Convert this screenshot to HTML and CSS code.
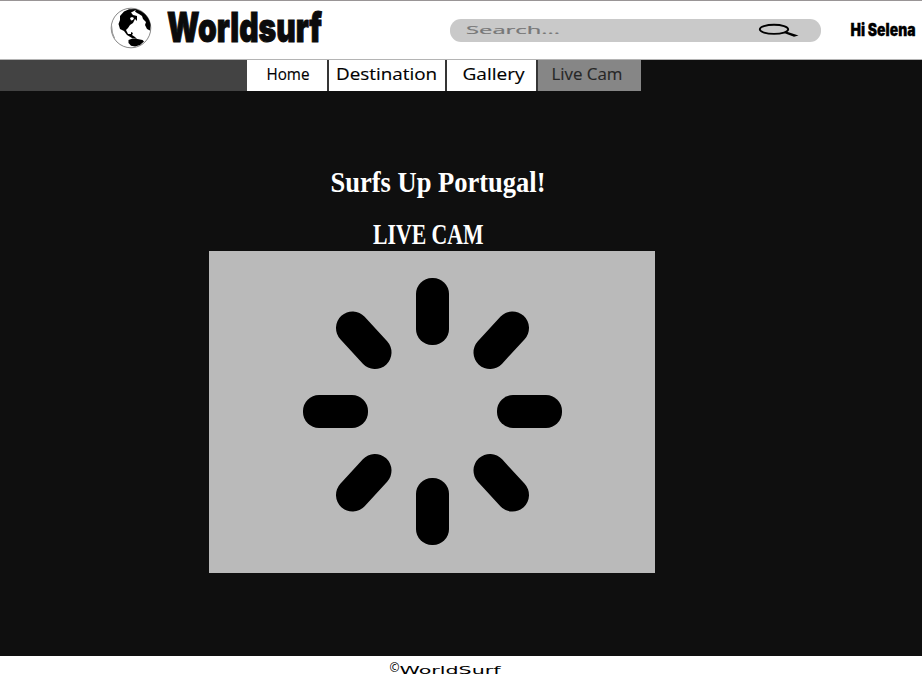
FILE: index.html
```html
<!DOCTYPE html>
<html lang="en">
<head>
<meta charset="utf-8">
<title>Worldsurf</title>
<link rel="stylesheet" href="styles.css">
</head>
<body>
<header class="header">
  <svg class="globe" viewBox="0 0 42 42" aria-hidden="true">
    <circle cx="21" cy="21" r="19.800" fill="#fff" stroke="#555" stroke-width=".7"/>
    <path d="M10 9L14 4.500L19 2.200L27 2L24 4L21 5.500L23 8L27 9L27 14L25 12L23 16L20 18L18 21L16 23L18 27L21 27L21 25L23 26L22 28L25 30L27 32L22 31L17 28L14 24L10 22L8.500 17L10 13Z"/>
    <path d="M26 2.200C34 4 40 11 40.500 18L40 23.500L37 22L35 18L36 15L33 12L32 9L29 7L27 6L25 4.500Z"/>
    <path d="M18.500 33L22.500 31.500L27.500 32L32.500 33L34 34.500L30 38L25 39.500L21 38.800L18.500 36Z"/>
    <path d="M20 11l2-1 2 1-1 2-2 .5z" fill="#fff"/>
    <path d="M1.500 18l1 8 2 5" fill="none" stroke="#999"/>
  </svg>
  <svg class="brand" viewBox="0 0 170 58"><text x="1" y="41" textLength="155" lengthAdjust="spacingAndGlyphs">Worldsurf</text></svg>
  <div class="search">
    <svg class="placeholder" viewBox="0 0 100 22"><text x="0" y="15" textLength="94" lengthAdjust="spacingAndGlyphs">Search...</text></svg>
    <svg class="lens" viewBox="0 0 42 16" aria-hidden="true"><ellipse cx="16" cy="6.300" rx="14.200" ry="4.600"/><path d="M25.500 9.500l3.500-.8 11.500 3.800-4.500 1.200-10-3.700z"/></svg>
  </div>
  <svg class="greeting" viewBox="0 0 72 36"><text x="0.500" y="24" textLength="65" lengthAdjust="spacingAndGlyphs">Hi Selena</text></svg>
</header>
<nav class="nav">
  <div class="rail"></div>
  <a class="tab home"><svg viewBox="0 0 80 31"><text x="19.500" y="20" textLength="43" lengthAdjust="spacingAndGlyphs">Home</text></svg></a>
  <a class="tab destination"><svg viewBox="0 0 116 31"><text x="7" y="20" textLength="101" lengthAdjust="spacingAndGlyphs">Destination</text></svg></a>
  <a class="tab gallery"><svg viewBox="0 0 89 31"><text x="15.500" y="20" textLength="62" lengthAdjust="spacingAndGlyphs">Gallery</text></svg></a>
  <a class="tab live"><svg viewBox="0 0 103 31"><text x="13.500" y="20" textLength="71" lengthAdjust="spacingAndGlyphs">Live Cam</text></svg></a>
</nav>
<main class="main">
  <svg class="title" viewBox="0 0 446 40"><text x="121.500" y="31" textLength="215" lengthAdjust="spacingAndGlyphs">Surfs Up Portugal!</text></svg>
  <svg class="subtitle" viewBox="0 0 446 50"><text x="164" y="43" textLength="110.500" lengthAdjust="spacingAndGlyphs">LIVE CAM</text></svg>
  <section class="video">
    <svg class="spinner" viewBox="0 0 260 268" aria-label="Loading">
      <rect x="114" y="0" width="33" height="67" rx="16"/>
      <rect x="114" y="200" width="33" height="67" rx="16"/>
      <rect x="1" y="117" width="65" height="33" rx="16"/>
      <rect x="195" y="117" width="65" height="33" rx="16"/>
      <path d="M50.500 50L73 74.500M210.500 50L188 74.500M50.500 217L73 192.500M210.500 217L188 192.500"/>
    </svg>
  </section>
</main>
<footer class="footer">
  <svg viewBox="0 0 120 20"><text class="mark" x="0.500" y="16" textLength="10" lengthAdjust="spacingAndGlyphs">©</text><text class="name" x="10.500" y="18" textLength="101" lengthAdjust="spacingAndGlyphs">WorldSurf</text></svg>
</footer>
</body>
</html>
```

FILE: styles.css
```css
* { box-sizing: border-box; }
body {
  margin: 0;
  height: 676px;
  overflow: hidden;
  display: flex;
  flex-direction: column;
  background: #0f0f0f;
  font-family: "Open Sans", sans-serif;
}
svg { display: block; flex: none; overflow: visible; }
.header {
  height: 60px;
  display: flex;
  align-items: flex-start;
  padding-left: 110px;
  background: #fff;
  border-top: 1px solid #999596;
  border-bottom: 1px solid #b4b4b4;
}
.globe { width: 42px; height: 42px; margin-top: 6px; }
.brand { width: 170px; height: 58px; margin-left: 14px; }
.brand text {
  font: 900 41px Inter, sans-serif;
  fill: #0b0b0b;
  stroke: #0b0b0b;
  stroke-width: 1px;
}
.search {
  width: 371px;
  height: 23px;
  margin: 18px 0 0 114px;
  padding: 0 21px 0 16px;
  display: flex;
  justify-content: space-between;
  border-radius: 11px;
  background: #c9c9c9;
}
.placeholder { width: 100px; height: 22px; }
.placeholder text { font-size: 11.5px; fill: #777; stroke: #777; stroke-width: .2px; }
.lens { width: 42px; height: 16px; margin-top: 4px; }
.lens ellipse { fill: none; stroke: #000; stroke-width: 1.9px; }
.greeting { width: 72px; height: 36px; margin: 11px 0 0 29px; }
.greeting text { font: 900 17px Inter, sans-serif; fill: #000; stroke: #000; stroke-width: .3px; }
.nav { height: 31px; display: flex; }
.rail { width: 247px; background: #434343; }
.tab { background: #fff; border-right: 2px solid #353535; }
.tab svg { width: 100%; height: 31px; }
.tab text { font-size: 16px; fill: #000; stroke: #000; stroke-width: .15px; }
.home { width: 82px; }
.destination { width: 118px; }
.gallery { width: 91px; }
.live { width: 103px; background: #868686; border: 0; }
.tab.live text { fill: #262626; stroke: #262626; }
.main {
  width: 446px;
  height: 565px;
  margin-left: 209.4px;
  padding-top: 70px;
}
.title { width: 446px; height: 40px; }
.subtitle { width: 446px; height: 50px; }
.title text, .subtitle text {
  font: bold 30px "Liberation Serif", serif;
  fill: #fff;
}
.video {
  height: 322px;
  display: grid;
  place-items: center;
  background: #bababa;
}
.spinner { width: 260px; height: 268px; }
.spinner path { fill: none; stroke: #000; stroke-width: 33px; stroke-linecap: round; }
.footer { height: 20px; background: #fff; padding-left: 389px; }
.footer svg { width: 120px; height: 20px; }
.mark { font-size: 12px; fill: #000; }
.name { font: 10px "DejaVu Sans", sans-serif; fill: #000; }
```
